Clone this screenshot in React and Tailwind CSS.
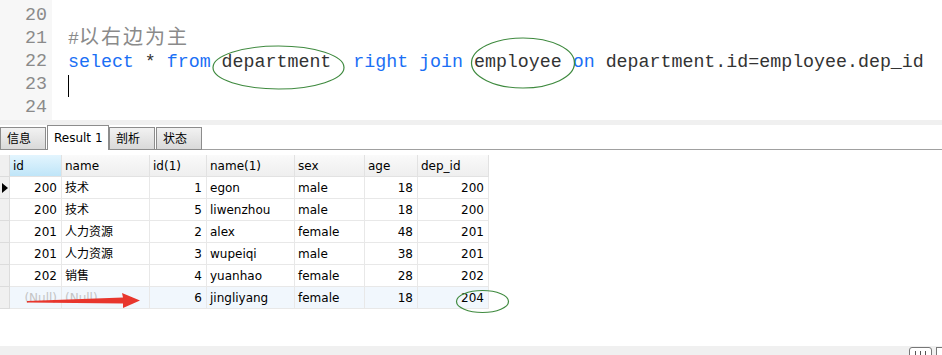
import React from "react";

const mono = { fontFamily: '"Liberation Mono", "Noto Sans CJK SC", monospace' };
const ui = { fontFamily: '"DejaVu Sans", "Noto Sans CJK SC", sans-serif' };

const cols = [
  { key: "id", label: "id", w: "w-[52px]", num: true },
  { key: "name", label: "name", w: "w-[88px]" },
  { key: "id1", label: "id(1)", w: "w-[57px]", num: true },
  { key: "name1", label: "name(1)", w: "w-[88px]" },
  { key: "sex", label: "sex", w: "w-[70px]" },
  { key: "age", label: "age", w: "w-[53px]", num: true },
  { key: "dep", label: "dep_id", w: "w-[71px]", num: true },
];

const rows = [
  { id: "200", name: "技术", id1: "1", name1: "egon", sex: "male", age: "18", dep: "200" },
  { id: "200", name: "技术", id1: "5", name1: "liwenzhou", sex: "male", age: "18", dep: "200" },
  { id: "201", name: "人力资源", id1: "2", name1: "alex", sex: "female", age: "48", dep: "201" },
  { id: "201", name: "人力资源", id1: "3", name1: "wupeiqi", sex: "male", age: "38", dep: "201" },
  { id: "202", name: "销售", id1: "4", name1: "yuanhao", sex: "female", age: "28", dep: "202" },
  { id: null, name: null, id1: "6", name1: "jingliyang", sex: "female", age: "18", dep: "204" },
];

function Tab({ label, active }) {
  if (active) {
    return (
      <div className="h-[25px] w-[62px] border border-b-0 border-[#8c8c8c] bg-white pl-[6px] pt-[3px] text-[12px] text-black">
        {label}
      </div>
    );
  }
  return (
    <div className="h-[23px] w-[46px] border border-[#8c8c8c] bg-gradient-to-b from-[#f2f2f2] to-[#d9d9d9] pl-[6px] pt-[2px] text-[12px] text-black">
      {label}
    </div>
  );
}

export default function App() {
  return (
    <div className="relative h-[355px] w-[942px] overflow-hidden bg-white">
      {/* editor */}
      <div className="flex h-[120px]" style={mono}>
        <div className="w-[52px] bg-[#f7f7f7] pt-[4px] pr-[5px] text-right text-[18.3px] leading-[23px] text-[#8a8a8a]">
          <div>20</div>
          <div>21</div>
          <div>22</div>
          <div>23</div>
          <div>24</div>
        </div>
        <div className="pl-[16px] pt-[4px] text-[18.3px] leading-[23px] whitespace-pre text-[#333]">
          <div>&nbsp;</div>
          <div className="text-[#8a8a8a]">
            #<span className="text-[20px] tracking-[2px]">以右边为主</span>
          </div>
          <div>
            <span className="text-[#1a6ff5]">select</span> * <span className="text-[#1a6ff5]">from</span> department  <span className="text-[#1a6ff5]">right join</span> employee <span className="text-[#1a6ff5]">on</span> department.id=employee.dep_id
          </div>
          <div className="flex h-[23px] items-center">
            <div className="h-[22px] w-px bg-black" />
          </div>
          <div>&nbsp;</div>
        </div>
      </div>
      <div className="h-[5px] bg-[#f0f0f0]" />

      {/* tabs */}
      <div className="flex h-[25px] items-end" style={ui}>
        <Tab label="信息" />
        <div className="h-[25px] w-px border-b border-[#8c8c8c]" />
        <Tab label="Result 1" active />
        <Tab label="剖析" />
        <div className="h-[25px] w-px border-b border-[#8c8c8c]" />
        <Tab label="状态" />
        <div className="h-[25px] flex-1 border-b border-[#a0a0a0]" />
      </div>

      {/* grid */}
      <div className="mt-[5px] w-[489px] text-[12px] text-black" style={ui}>
        <div className="flex h-[22px] bg-gradient-to-b from-[#fafafa] to-[#eeeeee]">
          <div className="w-[10px] border-r border-b border-[#dcdcdc] bg-[#f0f0f0]" />
          {cols.map((c, i) => (
            <div
              key={c.key}
              className={`${c.w} flex items-center border-r border-b border-[#e2e2e2] pl-[3px] ${
                i === 0 ? "bg-gradient-to-b from-[#e3f5fe] to-[#bfe5f8]" : ""
              }`}
            >
              {c.label}
            </div>
          ))}
        </div>
        {rows.map((r, ri) => (
          <div key={ri} className={`flex h-[22px] ${r.id === null ? "bg-[#f1f7fd]" : "bg-white"}`}>
            <div className="flex w-[10px] items-center justify-center border-r border-b border-[#dcdcdc] bg-[#f0f0f0]">
              {ri === 0 && (
                <div className="h-0 w-0 border-y-[5px] border-l-[6px] border-y-transparent border-l-black" />
              )}
            </div>
            {cols.map((c) => {
              const v = r[c.key];
              return (
                <div
                  key={c.key}
                  className={`${c.w} flex items-center border-r border-b border-[#e8e8e8] ${
                    c.num ? "justify-end pr-[4px]" : "pl-[3px]"
                  } ${v === null ? "text-[#c4c4c4]" : ""}`}
                >
                  {v === null ? "(Null)" : v}
                </div>
              );
            })}
          </div>
        ))}
      </div>

      {/* status bar */}
      <div className="absolute bottom-0 left-0 flex h-[9px] w-full items-start overflow-hidden bg-[#f0f0f0]">
        <div className="ml-auto mr-[-4px] mt-[1px] flex gap-[4px]">
          <div className="flex h-[12px] w-[23px] items-stretch justify-around rounded-[3px] border border-[#777] bg-white px-[3px] pt-[3px]">
            <div className="w-px bg-[#555]" />
            <div className="w-px bg-[#555]" />
            <div className="w-px bg-[#555]" />
          </div>
          <div className="h-[12px] w-[10px] border border-[#777] bg-white" />
        </div>
      </div>

      {/* annotations */}
      <svg className="pointer-events-none absolute inset-0" width="942" height="355" viewBox="0 0 942 355">
        <g fill="none" stroke="#3f8a3f" strokeWidth="1.2">
          <ellipse cx="278.5" cy="67.5" rx="65.5" ry="21.5" />
          <ellipse cx="523" cy="63" rx="51.5" ry="25" />
          <ellipse cx="482.5" cy="301.5" rx="26" ry="11" />
        </g>
        <polygon
          points="27,301 123,297.5 122,293 140,300.5 123,308 123,303.5 27,302.5"
          fill="#e8362d"
        />
      </svg>
    </div>
  );
}
